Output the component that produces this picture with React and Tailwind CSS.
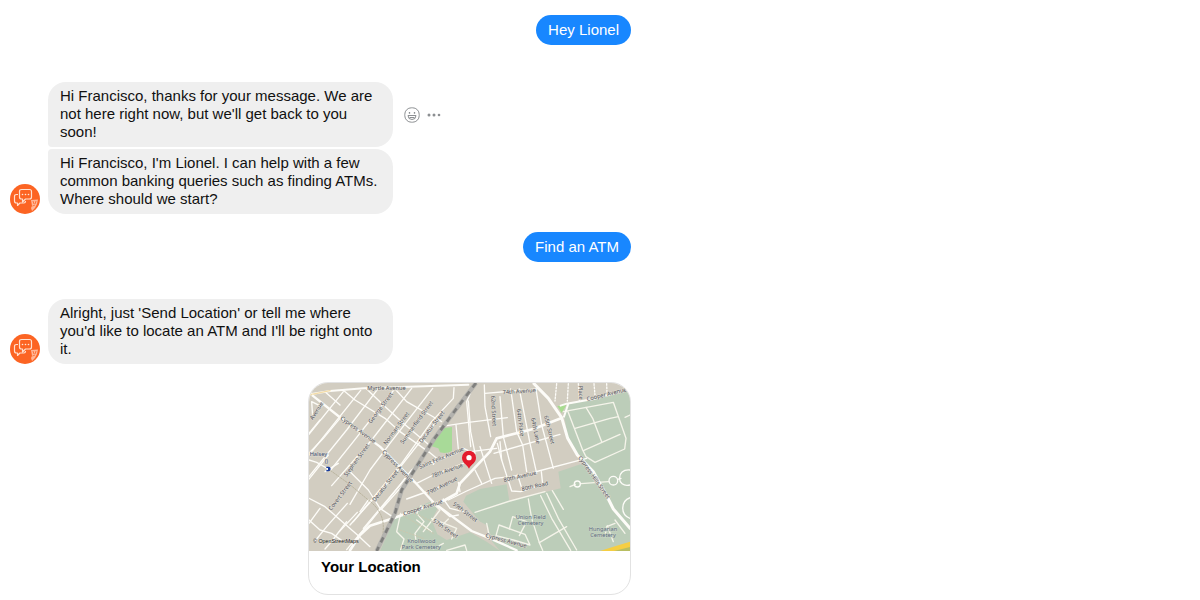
const streets = [
  'M130 50L27 178', 'M182 46L27 240', 'M232 44L140 165L27 305', 'M284 42L160 200L92 285', 'M335 40L215 195L95 332',
  'M398 40L270 205L210 285L150 388', 'M462 38L460 70L395 140L305 265L160 440', 'M430 112L270 315L150 450', 'M385 222L350 268L215 435L140 524',
  'M335 285L300 330L190 460', 'M318 320L245 402', 'M205 375L180 410', 'M27 175L60 135', 'M65 95L35 80L38 125',
  'M85 240L27 312', 'M27 255L50 262L85 282', 'M27 370L75 395L170 478L210 515', 'M27 435L60 465L95 475L130 500', 'M145 285L205 345L240 400L285 430',
  'M75 50L120 90', 'M130 46L165 75L255 130L300 170L388 232L410 250L400 268', 'M200 42L250 90L310 145L390 212', 'M285 42L320 80L390 120L425 140',
  'M120 130L70 190L27 235', 'M142 385L80 455L45 498', 'M172 412L118 470', 'M75 290L115 265', 'M60 400L27 445', 'M140 440L98 495L75 522',
  'M420 155L505 142L622 128', 'M468 150L475 222', 'M515 45L500 80L512 215', 'M505 78L512 170L525 235', 'M540 215L575 325',
  'M365 275L480 230L490 220L512 230L590 220', 'M350 325L400 300L490 265', 'M320 372L395 345L460 318', 'M475 322L480 350', 'M525 285L545 325',
  'M445 375L500 348L585 310L670 300L860 250', 'M555 55L710 42', 'M553 30L555 95L572 185', 'M600 65L610 185L635 285', 'M632 42L650 170L668 210L680 290',
  'M658 42L690 205L710 295', 'M708 42L725 150L760 280', 'M592 205L605 255L635 348L662 350L728 328L724 290', 'M582 235L780 178', 'M605 255L600 200', 'M652 298L668 348',
  'M430 372L450 400L490 410', 'M400 382L450 425L475 420',
];
const dashes = ['M770 26L765 78', 'M805 26L802 78', 'M835 26L838 78', 'M882 26L885 60', 'M920 26L921 55'];
const paths = [
  'M790 110L940 82L978 190L974 222L885 262L858 245L848 225L804 110', 'M825 160L930 130L955 125', 'M858 97L878 130L905 200', 'M850 227L960 178',
  'M975 127L990 120', 'M525 412L630 378L735 350', 'M685 372L695 430L718 503L728 526', 'M722 362L755 430L812 526', 'M740 355L775 430L830 525',
  'M757 347L790 403', 'M718 503L800 455', 'M560 445L568 485', 'M597 450L675 478L690 510L640 495L588 482Z', 'M628 462L638 425L680 440L658 482',
  'M363 392L350 415L372 440L345 475L348 498', 'M395 382L420 405L370 470', 'M302 415L290 470L312 492L302 524', 'M395 430L470 460L455 492',
  'M350 435L395 470', 'M422 455L445 432', 'M810 335L826 328M843 326L925 320', 'M915 485L920 455L945 445', 'M922 452L940 500M945 435L975 475',
  'M440 526L495 510L500 526', 'M400 522L430 505',
];
const labels = [
  ['Myrtle Avenue', 202, 46, 0], ['Avenue', 38, 136, -57], ['George Street', 213, 146, -53], ['Cypress Avenue', 120, 132, 36],
  ['Norman Street', 259, 211, -54], ['Summerfield Street', 309, 208, -54], ['Decatur Street', 365, 205, -53], ['Cypress Avenue', 245, 232, 46],
  ['Stephen Street', 140, 306, -54], ['Covert Street', 94, 407, -53], ['Decatur Street', 225, 381, -52], ['Saint Felix Avenue', 360, 282, -23],
  ['78th Avenue', 396, 309, -20], ['79th Avenue', 384, 360, -27], ['Cooper Avenue', 312, 422, -18], ['57th Street', 397, 440, 35], ['59th Street', 457, 389, 37],
  ['74th Avenue', 608, 58, -4], ['62nd Street', 573, 62, 87], ['64th Place', 650, 103, 82], ['64th Lane', 693, 130, 78], ['65th Street', 732, 123, 76],
  ['Place', 836, 32, 88], ['Cooper Avenue', 862, 78, -14], ['80th Avenue', 612, 321, -13], ['80th Road', 666, 348, -13],
  ['Cypress Hills Street', 834, 248, 55], ['Cypress Avenue', 556, 486, 15],
];

function MapPicture() {
  return (
    <svg viewBox="27 24 963 504" className="block w-full" role="img" aria-label="Map with a pin on your location">
      <rect x="27" y="24" width="963" height="504" fill="#d2cdc1" />
      <g fill="#bccdb9">
        <path d="M790 110L805 88L880 72L990 48V528H600L568 490L560 450L540 440L490 380L498 362L540 342L620 328L628 378L782 340L775 290L850 265L832 240L805 190Z" />
        <path d="M285 425L395 378L412 402L395 435L412 478L440 495L510 472L560 500L600 528H240Z" />
      </g>
      <path d="M490 400L540 440L565 455L572 490L515 468L430 400L445 380Z" fill="#d2cdc1" />
      <path d="M428 160L456 156V228Q440 238 420 232L415 220L392 213Z" fill="#a8da98" />
      <path d="M772 93L799 90L785 114Z" fill="#a8dc90" />
      <path d="M900 528L950 512L990 500V528Z" fill="#f5ce43" />
      <path d="M942 528L990 516V528Z" fill="#b8be62" />
      <g fill="none" stroke="#fdfcf8" strokeLinejoin="round" strokeLinecap="round">
        <g strokeWidth="4">{streets.map((d) => <path key={d} d={d} />)}</g>
        <g strokeWidth="4" strokeDasharray="5 5">{dashes.map((d) => <path key={d} d={d} />)}</g>
        <g strokeWidth="4" stroke="#f5f4ea">{paths.map((d) => <path key={d} d={d} />)}</g>
        <path d="M30 58L90 48L190 40L505 29" strokeWidth="6" />
        <path d="M27 60L90 47" strokeWidth="4" stroke="#f3dca8" />
        <path d="M38 62L130 135L240 215L345 322L400 382L515 468L570 490L650 526" strokeWidth="7" />
        <path d="M702 26L745 70L785 128L803 190L832 240L880 290L925 372L940 402L990 460" strokeWidth="9" />
        <path d="M783 130L700 162L590 190L570 230L480 325L470 355L435 375L340 408L280 430L210 452L180 480L150 526" strokeWidth="8" />
        <path d="M782 92L800 86L880 72L990 42M805 86L792 125" strokeWidth="6" />
        <circle cx="832" cy="327" r="9" strokeWidth="4" />
        <circle cx="940" cy="317" r="13" strokeWidth="4" />
        <path d="M990 285C948 280 948 340 990 330M990 368C962 378 960 420 990 430M953 313L963 310" strokeWidth="4" />
        <path d="M310 422L400 475M330 408L402 442M300 465L370 490" strokeWidth="3" stroke="#cbc8af" strokeDasharray="5 5" />
        <path d="M85 282L145 325L205 375C245 405 255 440 248 480" strokeWidth="3" stroke="#bab59f" strokeDasharray="5 4" />
      </g>
      <path d="M528 24L470 100L400 195L340 290L305 345L285 415L230 528" fill="none" stroke="#b3b2ae" strokeWidth="13" />
      <path d="M528 24L470 100L400 195L340 290L305 345L285 415L230 528" fill="none" stroke="#7f7f7d" strokeWidth="8" strokeDasharray="17 15" />
      <g fontFamily='"Noto Sans", sans-serif' fontSize="17" fill="#50515b" stroke="#dedbd1" strokeWidth="3" paintOrder="stroke">
        {labels.map(([text, x, y, angle]) => (
          <text key={`${x}-${y}`} transform={`translate(${x} ${y}) rotate(${angle})`}>{text}</text>
        ))}
        <g fill="#3d4e72"><text x="29" y="243">Halsey</text><text x="74" y="264">()</text></g>
        <g fill="#5d6a80" stroke="#c8d4c4" textAnchor="middle">
          <text x="364" y="505">Knollwood</text><text x="364" y="523">Park Cemetery</text>
          <text x="692" y="431">Union Field</text><text x="692" y="450">Cemetery</text>
          <text x="909" y="467">Hungarian</text><text x="909" y="486">Cemetery</text>
        </g>
      </g>
      <path d="M79 275H87Q92 276 92 282Q91 289 85 289H79V285H84V279H79Z" fill="#183b9b" />
      <text x="39" y="504" fontFamily='"Liberation Sans", sans-serif' fontSize="16" fill="#171717" stroke="#e4e1d8" strokeWidth="2" paintOrder="stroke">© OpenStreetMaps</text>
      <path d="M507 281C500 266 486 264 486 248A21 21 0 0 1 528 248C528 264 514 266 507 281Z" fill="#e41b2d" />
      <circle cx="507" cy="248" r="8" fill="#fff" />
    </svg>
  );
}

function Avatar() {
  return (
    <svg viewBox="0 0 30 30" className="size-[30px] shrink-0" role="img" aria-label="Lionel">
      <circle cx="15" cy="15" r="15" fill="#fc6423" />
      <g fill="none" stroke="#ffe0cf" strokeWidth="1.2" strokeLinejoin="round">
        <path d="M11.500 5.500H19.500Q21.500 5.500 21.500 7.500V13Q21.500 15 19.500 15H15.500L12.500 18V15H11.500Q9.500 15 9.500 13V7.500Q9.500 5.500 11.500 5.500Z" />
        <path d="M8 10.500H6.500Q4.500 10.500 4.500 12.500V17Q4.500 19 6.500 19H7.500V21.500L10 19H14Q15.500 19 15.500 17" />
      </g>
      <g fill="#ffe6d8"><circle cx="12.500" cy="10.500" r=".8" /><circle cx="15.500" cy="10.500" r=".8" /><circle cx="18.500" cy="10.500" r=".8" /></g>
      <path d="M21 16L28 15.500L27 20L25 24L22 27L21 24L22 22Z" fill="#ffb798" />
      <path d="M23 17L24 20M26 17L25 20M22.500 22L25 21" fill="none" stroke="#fc6423" strokeWidth=".8" />
    </svg>
  );
}

function Sent({ children }) {
  return <p className="self-end rounded-full bg-[#1887ff] px-3 py-1.5 leading-[18px] text-white">{children}</p>;
}

function Received({ children, shape }) {
  return <p className={`w-[345px] bg-[#efefef] px-3 pt-[5px] pb-1.5 ${shape}`}>{children}</p>;
}

export default function App() {
  return (
    <main className="flex max-w-[641px] flex-col px-2.5 pt-[15px] pb-1 font-['Liberation_Sans',Arial,sans-serif] text-[15px] leading-[18px] text-[#111]">
      <Sent>Hey Lionel</Sent>
      <section className="mt-[37px] mb-[18px] flex items-end gap-2">
        <Avatar />
        <div className="flex flex-col gap-0.5">
          <div className="flex items-center gap-[11px]">
            <Received shape="rounded-[18px] rounded-bl-[4px]">Hi Francisco, thanks for your message. We are not here right now, but we'll get back to you soon!</Received>
            <div className="flex items-center gap-[7px]">
              <button type="button" aria-label="React">
                <svg viewBox="0 0 16 16" className="block size-4" fill="none" stroke="#8c8f92">
                  <rect x=".8" y=".8" width="14.400" height="14.400" rx="6.500" />
                  <path d="M4 8.500H12Q12 12.500 8 12.500Q4 12.500 4 8.500ZM5.500 10.500H10.500" />
                  <path d="M5.500 5V6.700M10.500 5V6.700" strokeWidth="1.300" />
                </svg>
              </button>
              <button type="button" aria-label="More options">
                <svg viewBox="0 0 14 4" className="block h-1 w-3.5" fill="#8c8f92">
                  <circle cx="2" cy="2" r="1.500" /><circle cx="7" cy="2" r="1.500" /><circle cx="12" cy="2" r="1.300" />
                </svg>
              </button>
            </div>
          </div>
          <Received shape="rounded-[18px] rounded-tl-[4px]">Hi Francisco, I'm Lionel. I can help with a few common banking queries such as finding ATMs. Where should we start?</Received>
        </div>
      </section>
      <Sent>Find an ATM</Sent>
      <section className="mt-[37px] mb-[18px] flex items-end gap-2">
        <Avatar />
        <Received shape="rounded-[18px]">Alright, just 'Send Location' or tell me where you'd like to locate an ATM and I'll be right onto it.</Received>
      </section>
      <a href="#location" className="w-[323px] self-end overflow-hidden rounded-[20px] border border-[#e2e2e2] bg-white">
        <MapPicture />
        <h2 className="px-3 pt-[7px] pb-[18px] font-bold text-black">Your Location</h2>
      </a>
    </main>
  );
}
